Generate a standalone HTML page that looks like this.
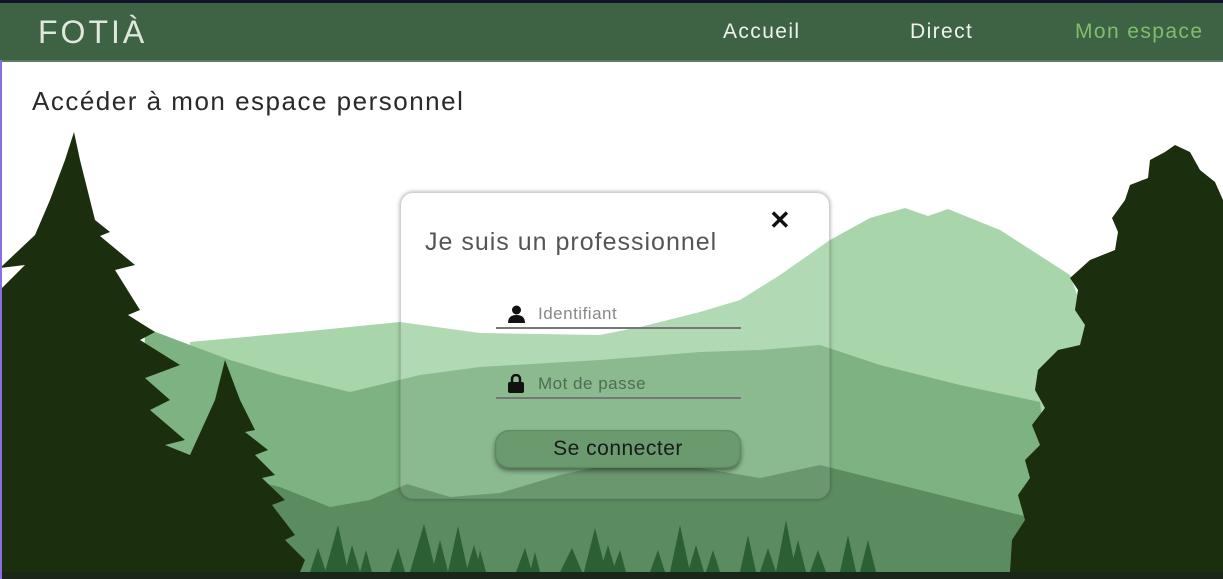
<!DOCTYPE html>
<html><head><meta charset="utf-8"><style>
html,body{margin:0;padding:0;width:1223px;height:579px;overflow:hidden;background:#fff;font-family:"Liberation Sans",sans-serif;}
#top{position:absolute;left:0;top:0;width:1223px;height:3px;background:#14122a}
#nav{position:absolute;left:0;top:3px;width:1223px;height:57px;background:#3e6244;border-bottom:2px solid #5d7d62}
#nav .logo{position:absolute;left:38px;top:11px;font-size:32px;color:#dfe8dc;letter-spacing:3px;font-weight:300}
#nav a{position:absolute;top:17px;font-size:21px;color:#eef2ec;text-decoration:none;letter-spacing:1.4px}
#left{position:absolute;left:0;top:60px;width:2px;height:519px;background:#8a6fe0}
h1{position:absolute;left:32px;top:86px;margin:0;font-weight:normal;font-size:26px;letter-spacing:1.5px;color:#2a2a2a}
svg.bg{position:absolute;left:0;top:0}
#box{position:absolute;left:400px;top:192px;width:428px;height:305px;border-radius:13px;background:rgba(255,255,255,0.1);box-shadow:0 0 4px rgba(0,0,0,0.35);border:1px solid rgba(120,120,120,0.35)}
#box .t{position:absolute;left:24px;top:35px;font-size:25px;letter-spacing:1px;color:#555;font-weight:300}
#box .x{position:absolute;left:368px;top:12px;font-size:26px;color:#111;font-weight:bold}
.f{position:absolute;left:95px;width:245px;border-bottom:2px solid #777;height:28px}
.f span{position:absolute;left:42px;top:5px;font-size:17px;letter-spacing:0.5px;color:#888}
.btn{position:absolute;left:94px;top:237px;width:246px;height:38px;border-radius:14px;background:#6a9a6d;box-shadow:0 3px 5px rgba(0,0,0,0.45),inset 0 0 2px rgba(0,0,0,.3);text-align:center;line-height:38px;font-size:21px;letter-spacing:0.5px;color:#1a1a1a}
</style></head><body>
<svg class="bg" width="1223" height="579" viewBox="0 0 1223 579">
<path fill="#a9d5ab" d="M190 342 L300 332 L400 322 L480 333 L600 335 L640 327 L700 312 L740 300 L780 275 L830 240 L870 218 L905 208 L928 216 L948 209 L1000 230 L1070 275 L1090 330 L1090 579 L190 579Z"/>
<path fill="#7db382" d="M145 328 L190 345 L230 360 L280 375 L350 392 L420 375 L480 367 L600 360 L700 352 L760 350 L820 345 L880 365 L960 385 L1040 402 L1060 579 L140 579Z"/>
<path fill="#5b8c5f" d="M250 480 L280 487 L330 507 L370 500 L407 484 L450 497 L500 493 L560 475 L620 462 L655 458 L700 468 L760 478 L820 465 L880 480 L960 500 L1040 520 L1040 579 L250 579Z"/>
<g fill="#2a6034">
<path d="M310 572 L318 548 L326 572Z"/><path d="M325 572 L338 525 L348 572Z"/><path d="M345 572 L352 545 L360 572Z"/><path d="M360 572 L366 550 L372 572Z"/><path d="M390 572 L398 548 L405 572Z"/><path d="M410 572 L424 524 L436 572Z"/><path d="M432 572 L440 540 L448 572Z"/><path d="M448 572 L458 526 L468 572Z"/><path d="M466 572 L474 545 L482 572Z"/><path d="M476 572 L480 550 L486 572Z"/><path d="M516 572 L525 548 L532 572Z"/><path d="M530 572 L535 552 L540 572Z"/><path d="M560 572 L572 548 L582 572Z"/><path d="M584 572 L595 528 L606 572Z"/><path d="M600 572 L608 545 L616 572Z"/><path d="M612 572 L620 550 L626 572Z"/><path d="M650 572 L658 550 L665 572Z"/><path d="M670 572 L680 525 L690 572Z"/><path d="M688 572 L696 545 L704 572Z"/><path d="M706 572 L713 550 L720 572Z"/><path d="M740 572 L748 535 L756 572Z"/><path d="M760 572 L768 548 L776 572Z"/><path d="M776 572 L786 520 L796 572Z"/><path d="M790 572 L798 540 L806 572Z"/><path d="M810 572 L818 550 L826 572Z"/><path d="M840 572 L848 535 L856 572Z"/><path d="M860 572 L868 540 L876 572Z"/>
</g>
<path fill="#1b2e0e" d="M74 132 L80 160 L95 220 L110 232 L100 236 L135 265 L115 270 L140 310 L128 315 L155 332 L140 340 L180 365 L145 378 L170 400 L150 410 L185 440 L165 445 L190 455 L215 400 L225 360 L240 400 L255 430 L245 432 L268 450 L255 455 L275 475 L262 478 L285 500 L272 505 L295 535 L285 540 L305 560 L300 572 L0 572 L0 290 L25 265 L0 268 L35 235 L50 200 L65 160Z"/>
<path fill="#1b2e0e" d="M1175 145 L1190 152 L1200 170 L1215 182 L1223 200 L1223 572 L1010 572 L1012 540 L1025 520 L1018 495 L1030 478 L1025 460 L1040 445 L1032 425 L1045 408 L1035 390 L1038 370 L1058 350 L1080 345 L1085 325 L1075 310 L1078 290 L1070 278 L1090 260 L1115 250 L1118 232 L1112 218 L1125 200 L1130 185 L1148 178 L1150 160 L1165 152Z"/>
<rect x="0" y="572" width="1223" height="7" fill="#1b261a"/>
</svg>
<div id="top"></div>
<div id="nav"><div class="logo">FOTIÀ</div>
<a style="left:723px">Accueil</a><a style="left:910px">Direct</a><a style="left:1075px;color:#7fbf6a">Mon espace</a></div>
<div id="left"></div>
<h1>Accéder à mon espace personnel</h1>
<div id="box">
<div class="t">Je suis un professionnel</div>
<div class="x">✕</div>
<div class="f" style="top:106px"><svg style="position:absolute;left:12px;top:6px" width="17" height="18" viewBox="0 0 17 18"><circle cx="8.5" cy="5" r="4.5" fill="#111"/><path d="M0 18 Q0 10 8.5 10 Q17 10 17 18Z" fill="#111"/></svg><span>Identifiant</span></div>
<div class="f" style="top:176px"><svg style="position:absolute;left:12px;top:5px" width="16" height="19" viewBox="0 0 16 19"><path d="M4 8 V5 a4 4 0 0 1 8 0 V8" stroke="#111" stroke-width="2.5" fill="none"/><rect x="0" y="8" width="16" height="11" rx="2" fill="#111"/></svg><span style="color:#4d6e50">Mot de passe</span></div>
<div class="btn">Se connecter</div>
</div>
</body></html>
